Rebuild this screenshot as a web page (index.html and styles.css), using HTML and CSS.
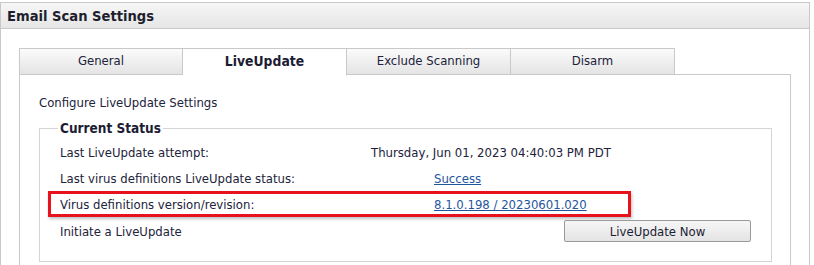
FILE: index.html
```html
<!DOCTYPE html>
<html>
<head>
<meta charset="utf-8">
<link rel="stylesheet" href="styles.css">
</head>
<body>
<div class="panel">
  <div class="panel-head">Email Scan Settings</div>
  <div class="panel-body">
    <div class="tabs">
      <div class="tab">General</div>
      <div class="tab active">LiveUpdate</div>
      <div class="tab">Exclude Scanning</div>
      <div class="tab">Disarm</div>
    </div>
    <div class="tab-panel">
      <div class="intro">Configure LiveUpdate Settings</div>
      <fieldset class="status">
        <legend>Current Status</legend>
        <div class="row">
          <div class="label">Last LiveUpdate attempt:</div>
          <div class="value">Thursday, Jun 01, 2023 04:40:03 PM PDT</div>
        </div>
        <div class="row">
          <div class="label">Last virus definitions LiveUpdate status:</div>
          <div class="value"><a class="link" href="#">Success</a></div>
        </div>
        <div class="row marked">
          <div class="label">Virus definitions version/revision:</div>
          <div class="value"><a class="link" href="#">8.1.0.198 / 20230601.020</a></div>
        </div>
        <div class="row">
          <div class="label">Initiate a LiveUpdate</div>
          <div class="value"><button class="btn">LiveUpdate Now</button></div>
        </div>
      </fieldset>
    </div>
  </div>
</div>
</body>
</html>
```
FILE: styles.css
```css
html, body {
  margin: 0;
  padding: 0;
  background: #fff;
}
body {
  font-family: "DejaVu Sans Condensed", "DejaVu Sans", sans-serif;
  font-size: 13px;
  color: #22223a;
  height: 265px;
  overflow: hidden;
}
.panel {
  margin-top: 2px;
  width: 808px;
  height: 262px;
  border: 1px solid #c9c9c9;
  border-bottom: 0;
  overflow: hidden;
}
.panel-head {
  height: 25px;
  line-height: 26px;
  padding-left: 6px;
  font-weight: bold;
  font-size: 14.6px;
  color: #1e1e2e;
  background: linear-gradient(#f6f6f6, #e6e6e6);
  border-bottom: 1px solid #c9c9c9;
}
.panel-body {
  padding: 19px 0 0 18px;
}
.tabs {
  display: flex;
  height: 27px;
  position: relative;
  z-index: 1;
}
.tab {
  box-sizing: border-box;
  width: 164px;
  height: 27px;
  line-height: 24px;
  text-align: center;
  border: 1px solid #c9c9c9;
  border-left-width: 0;
  background: linear-gradient(#fbfbfb, #e4e4e4);
}
.tab:first-child {
  border-left-width: 1px;
}
.tab.active {
  background: #fff;
  border-bottom-color: #fff;
  font-weight: bold;
  font-size: 13.8px;
  color: #1c1c34;
  height: 28px;
}
.tab-panel {
  box-sizing: border-box;
  width: 772px;
  height: 200px;
  margin-top: -1px;
  border: 1px solid #c9c9c9;
  padding: 19px 18px 0 19px;
}
.intro {
  line-height: 17px;
}
.status {
  box-sizing: border-box;
  width: 733px;
  margin: 9px 0 0 0;
  padding: 3px 0 16px 18px;
  border: 1px solid #d4d4d4;
  min-width: 0;
}
.status legend {
  padding: 0 2px;
  font-weight: bold;
  font-size: 13.5px;
  line-height: 16px;
  color: #1c1c34;
}
.row {
  display: flex;
  align-items: center;
  height: 26px;
  padding-left: 2px;
  position: relative;
}
.row:last-child {
  height: 28px;
}
.label {
  width: 311px;
  flex: none;
}
.value {
  flex: 1;
}
.link {
  color: #1f56a0;
  text-decoration: underline;
  margin-left: 63px;
}
.marked::after {
  content: "";
  position: absolute;
  left: -10px;
  top: 0;
  width: 577px;
  height: 20px;
  border: 3px solid #e8121c;
  box-shadow: 1px 2px 3px rgba(0,0,0,0.25);
  pointer-events: none;
}
.btn {
  margin-left: 193px;
  width: 187px;
  height: 22px;
  font-family: inherit;
  font-size: 13px;
  color: #1c1c34;
  background: linear-gradient(#f6f6f6, #e4e4e4);
  border: 1px solid #9a9a9a;
  border-radius: 2px;
  padding: 0;
}
```
